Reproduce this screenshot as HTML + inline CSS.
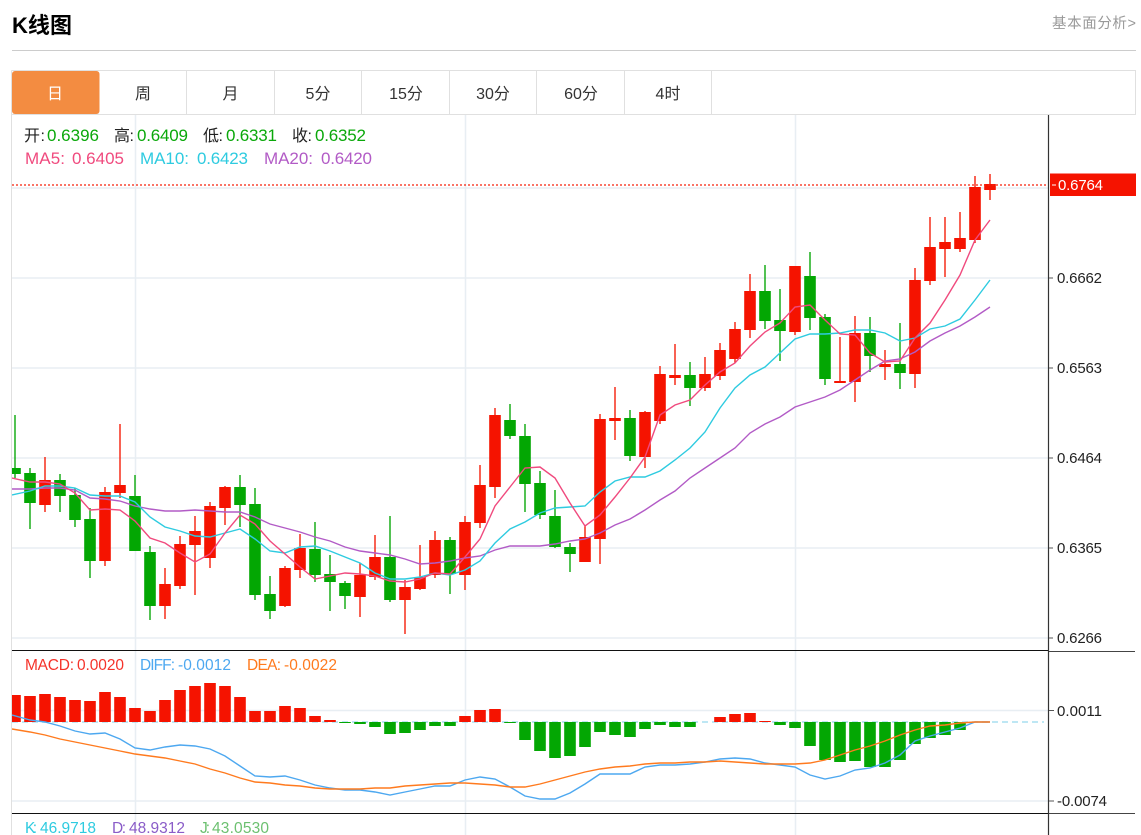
<!DOCTYPE html>
<html lang="zh">
<head>
<meta charset="utf-8">
<title>K线图</title>
<style>
html,body{margin:0;padding:0;background:#fff;width:1141px;height:835px;overflow:hidden}
svg{position:absolute;left:0;top:0;display:block}
text{font-family:"Liberation Sans","Noto Sans CJK SC",sans-serif}
.tab{font-size:16px;fill:#333;text-anchor:middle}
.ax{font-size:15px;fill:#222}
.info{font-size:17px}
.info .l{font-size:16px}
.sub{font-size:15.5px}
</style>
</head>
<body>
<svg width="1141" height="835" viewBox="0 0 1141 835" xmlns="http://www.w3.org/2000/svg">
<defs><clipPath id="c"><rect x="12" y="115" width="1036" height="720"/></clipPath></defs>

<text x="12" y="33" font-size="22" font-weight="700" fill="#000" textLength="60">K线图</text>
<text x="1052" y="28" font-size="14.5" fill="#999" textLength="84">基本面分析&gt;</text>
<path d="M12 50.5H1136" stroke="#ccc" stroke-width="1"/>

<!-- tabs -->
<path d="M11.5 70.5H1135.5V114.5H1048M11.5 70.5V835M12 114.5H1048" fill="none" stroke="#e0e0e0"/>
<path d="M186.5 71V114M274.5 71V114M361.5 71V114M449.5 71V114M536.5 71V114M624.5 71V114M711.5 71V114" stroke="#e0e0e0"/>
<rect x="12" y="71" width="87.5" height="43" rx="3" fill="#f38c41"/>
<text class="tab" x="55" y="99" style="fill:#fff">日</text>
<text class="tab" x="143" y="99">周</text>
<text class="tab" x="230.500" y="99">月</text>
<text class="tab" x="318" y="99">5分</text>
<text class="tab" x="406" y="99">15分</text>
<text class="tab" x="493" y="99">30分</text>
<text class="tab" x="581" y="99">60分</text>
<text class="tab" x="668" y="99">4时</text>

<g clip-path="url(#c)">
<!-- grid -->
<path d="M12 188H1048M12 278H1048M12 368H1048M12 458H1048M12 548H1048M12 638H1048M12 710.500H1048M12 801H1048" stroke="#e8eef3" stroke-width="1.5"/>
<path d="M135.500 115V835M465.500 115V835M795.500 115V835" stroke="#e8eef3" stroke-width="1.5"/>

<!-- candle wicks -->
<path stroke="#f5200c" stroke-width="1.4" fill="none" d="M45 457V512M105 487V566M120 424V498M165 568V619M180 536V589M195 516V595M210 502V568M225 486V525M285 566V607M300 534V578M360 563V617M375 535V580M405 580V634M420 545V590M435 531V578M465 516V590M480 465V528M495 408V498M585 525V562M600 414V564M615 387V440M645 411V468M660 366V424M675 344V385M705 357V391M720 343V380M735 322V363M750 274V338M795 266V335M840 337V383M855 316V402M885 350V380M915 268V388M930 217V285M945 217V277M960 212V252M975 176V243M990 174V200"/>
<path stroke="#0aa80a" stroke-width="1.4" fill="none" d="M15 415V478M30 468V529M60 474V512M75 488V527M90 508V578M135 475V551M150 546V620M240 475V527M255 488V600M270 576V619M315 522V582M330 555V611M345 581V609M390 516V602M450 537V594M510 404V439M525 424V512M540 471V519M555 490V548M570 543V572M630 410V461M690 362V406M765 265V329M780 289V361M810 252V330M825 314V385M870 317V372M900 323V389"/>
<!-- candle bodies -->
<path stroke="#f51300" stroke-width="11.600" fill="none" d="M45 480V505M105 492V561M120 485V493M165 584V606M180 544V586M195 531V545M210 506V558M225 487V508M285 568V606M300 548V570M360 575V597M375 557V577M405 587V600M420 577V589M435 540V575M465 522V575M480 485V523M495 415V487M585 537V562M600 419V539M615 418V421M645 412V457M660 374V421M675 375V378M705 374V388M720 350V376M735 329V359M750 291V330M795 266V332M840 381V383M855 333V382M885 364V367M915 280V374M930 247V281M945 242V249M960 238V249M975 187V240M990 184V190"/>
<path stroke="#03a703" stroke-width="11.600" fill="none" d="M15 468V474M30 473V503M60 480V496M75 495V520M90 519V561M135 496V551M150 552V606M240 487V505M255 504V595M270 594V611M315 549V575M330 574V582M345 583V596M390 557V600M450 540V574M510 420V436M525 436V484M540 483V515M555 516V547M570 547V554M630 418V456M690 375V388M765 291V321M780 320V331M810 276V318M825 317V379M870 333V356M900 364V373"/>

<!-- MA lines -->
<polyline fill="none" stroke="#b25bc6" stroke-width="1.4" points="12,489 30,489 45,488 60,488 75,490 90,498 105,499 120,501 135,506 150,509 165,511 180,511 195,510 210,511 225,512 240,512 255,517 270,524 285,528 300,532 315,537 330,541 345,547 360,551 375,553 390,555 405,559 420,564 435,563 450,561 465,558 480,556 495,550 510,546 525,546 540,546 555,544 570,541 585,539 600,533 615,525 630,519 645,510 660,500 675,491 690,478 705,468 720,458 735,448 750,433 765,424 780,417 795,407 810,402 825,397 840,390 855,380 870,370 885,361 900,359 915,352 930,341 945,333 960,326 975,317 990,307"/>
<polyline fill="none" stroke="#2ecbe0" stroke-width="1.4" points="12,495 30,491 45,486 60,486 75,488 90,495 105,496 120,496 135,502 150,517 165,527 180,531 195,536 210,537 225,533 240,529 255,539 270,551 285,553 300,547 315,546 330,551 345,557 360,563 375,573 390,579 405,579 420,577 435,573 450,575 465,570 480,561 495,543 510,529 525,522 540,513 555,508 570,507 585,506 600,492 615,481 630,477 645,477 660,471 675,460 690,448 705,432 720,408 735,388 750,375 765,367 780,353 795,339 810,334 825,334 840,333 855,330 870,330 885,333 900,341 915,338 930,329 945,326 960,319 975,300 990,280"/>
<polyline fill="none" stroke="#f04a7e" stroke-width="1.4" points="12,478 30,482 45,482 60,484 75,493 90,510 105,509 120,510 135,521 150,538 165,543 180,553 195,562 210,554 225,533 240,515 255,524 270,541 285,554 300,567 315,579 330,576 345,573 360,574 375,576 390,581 405,582 420,579 435,573 450,574 465,557 480,539 495,506 510,487 525,468 540,467 555,478 570,503 585,526 600,515 615,497 630,478 645,457 660,415 675,405 690,400 705,385 720,372 735,363 750,346 765,332 780,323 795,307 810,305 825,320 840,334 855,335 870,353 885,362 900,361 915,338 930,323 945,300 960,275 975,240 990,220"/>

<!-- last price line -->
<path d="M12 185H1048" stroke="#f5200c" stroke-width="1.2" stroke-dasharray="2 2"/>

<!-- MACD hist -->
<path d="M12 722H1044" stroke="#a8dff0" stroke-width="1.4" stroke-dasharray="6 4"/>
<path stroke="#f51300" stroke-width="11.600" fill="none" d="M15 695V722M30 696V722M45 694V722M60 697V722M75 700V722M90 701V722M105 692V722M120 697V722M135 708V722M150 711V722M165 700V722M180 690V722M195 686V722M210 683V722M225 686V722M240 697V722M255 711V722M270 711V722M285 706V722M300 708V722M315 716V722M330 720V722M465 716V722M480 710V722M495 709V722M720 717V722M735 714V722M750 713V722M765 721V722"/>
<path stroke="#03a703" stroke-width="11.600" fill="none" d="M345 722V723M360 722V724M375 722V727M390 722V734M405 722V733M420 722V730M435 722V726M450 722V726M510 722V723M525 722V740M540 722V751M555 722V758M570 722V756M585 722V747M600 722V732M615 722V735M630 722V737M645 722V729M660 722V725M675 722V727M690 722V727M780 722V725M795 722V728M810 722V746M825 722V760M840 722V762M855 722V761M870 722V767M885 722V767M900 722V760M915 722V744M930 722V738M945 722V735M960 722V730"/>
<polyline fill="none" stroke="#4da8f0" stroke-width="1.4" points="12,715 30,720 45,722 60,726 75,731 90,734 105,733 120,739 135,748 150,750 165,747 180,745 195,746 210,749 225,756 240,766 255,776 270,777 285,776 300,780 315,785 330,788 345,790 360,790 375,792 390,795 405,792 420,789 435,786 450,786 465,780 480,777 495,779 510,787 525,796 540,799 555,799 570,793 585,784 600,774 615,774 630,774 645,767 660,765 675,765 690,764 705,762 720,759 735,758 750,759 765,763 780,765 795,767 810,775 825,779 840,776 855,770 870,768 885,763 900,755 915,741 930,736 945,732 960,728 975,722 990,722"/>
<polyline fill="none" stroke="#ff7a1e" stroke-width="1.4" points="12,729 30,732 45,735 60,739 75,742 90,745 105,748 120,751 135,754 150,756 165,758 180,761 195,764 210,769 225,773 240,778 255,782 270,783 285,785 300,786 315,788 330,789 345,789 360,789 375,788 390,788 405,786 420,785 435,784 450,783 465,783 480,784 495,785 510,787 525,787 540,784 555,780 570,776 585,772 600,769 615,767 630,766 645,764 660,763 675,763 690,762 705,762 720,761 735,762 750,763 765,764 780,764 795,764 810,763 825,760 840,755 855,750 870,746 885,741 900,735 915,730 930,726 945,725 960,723 975,722 990,722"/>
</g>

<!-- panel separators and axis -->
<path d="M12 650.500H1048M12 813.500H1048" stroke="#111" stroke-width="1"/>
<path d="M1048.500 115V835" stroke="#333" stroke-width="1.200"/>
<path d="M1049 651.500H1135M1049 813.500H1135" stroke="#444" stroke-width="1"/>
<path d="M1049 278H1053M1049 368H1053M1049 458H1053M1049 548H1053M1049 638H1053M1049 710.500H1054M1049 801H1054" stroke="#555" stroke-width="1"/>

<rect x="1050" y="173.500" width="86" height="22.500" fill="#f51300"/>
<path d="M1052 185H1056" stroke="#fff" stroke-width="1"/>
<text class="ax" x="1058" y="190" style="fill:#fff" textLength="45">0.6764</text>
<text class="ax" x="1057" y="283" textLength="45">0.6662</text>
<text class="ax" x="1057" y="373" textLength="45">0.6563</text>
<text class="ax" x="1057" y="463" textLength="45">0.6464</text>
<text class="ax" x="1057" y="553" textLength="45">0.6365</text>
<text class="ax" x="1057" y="643" textLength="45">0.6266</text>
<text class="ax" x="1057" y="716" textLength="45">0.0011</text>
<text class="ax" x="1057" y="806" textLength="50">-0.0074</text>

<!-- OHLC -->
<g class="info">
<text class="l" x="24" y="141" fill="#222" textLength="21">开:</text><text x="47" y="141" fill="#0aa80a" textLength="52">0.6396</text>
<text class="l" x="114" y="141" fill="#222" textLength="20">高:</text><text x="137" y="141" fill="#0aa80a" textLength="51">0.6409</text>
<text class="l" x="203" y="141" fill="#222" textLength="20">低:</text><text x="226" y="141" fill="#0aa80a" textLength="51">0.6331</text>
<text class="l" x="292" y="141" fill="#222" textLength="20">收:</text><text x="315" y="141" fill="#0aa80a" textLength="51">0.6352</text>
<text x="25" y="164" fill="#f04a7e" textLength="40">MA5:</text><text x="72" y="164" fill="#f04a7e" textLength="52">0.6405</text>
<text x="140" y="164" fill="#2ecbe0" textLength="49">MA10:</text><text x="197" y="164" fill="#2ecbe0" textLength="51">0.6423</text>
<text x="264" y="164" fill="#b25bc6" textLength="49">MA20:</text><text x="321" y="164" fill="#b25bc6" textLength="51">0.6420</text>
</g>
<g class="sub">
<text x="25" y="670" fill="#f5332a" textLength="49">MACD:</text><text x="77" y="670" fill="#f5332a" textLength="47">0.0020</text>
<text x="140" y="670" fill="#4da8f0" textLength="35">DIFF:</text><text x="178" y="670" fill="#4da8f0" textLength="53">-0.0012</text>
<text x="247" y="670" fill="#ff7a1e" textLength="34">DEA:</text><text x="284" y="670" fill="#ff7a1e" textLength="53">-0.0022</text>
<text x="25" y="833" fill="#2ecbe0" textLength="12">K:</text><text x="40" y="833" fill="#2ecbe0" textLength="56">46.9718</text>
<text x="112" y="833" fill="#8a5cc8" textLength="14">D:</text><text x="129" y="833" fill="#8a5cc8" textLength="56">48.9312</text>
<text x="200" y="833" fill="#6cc070" textLength="10">J:</text><text x="212" y="833" fill="#6cc070" textLength="57">43.0530</text>
</g>
</svg>
</body>
</html>
